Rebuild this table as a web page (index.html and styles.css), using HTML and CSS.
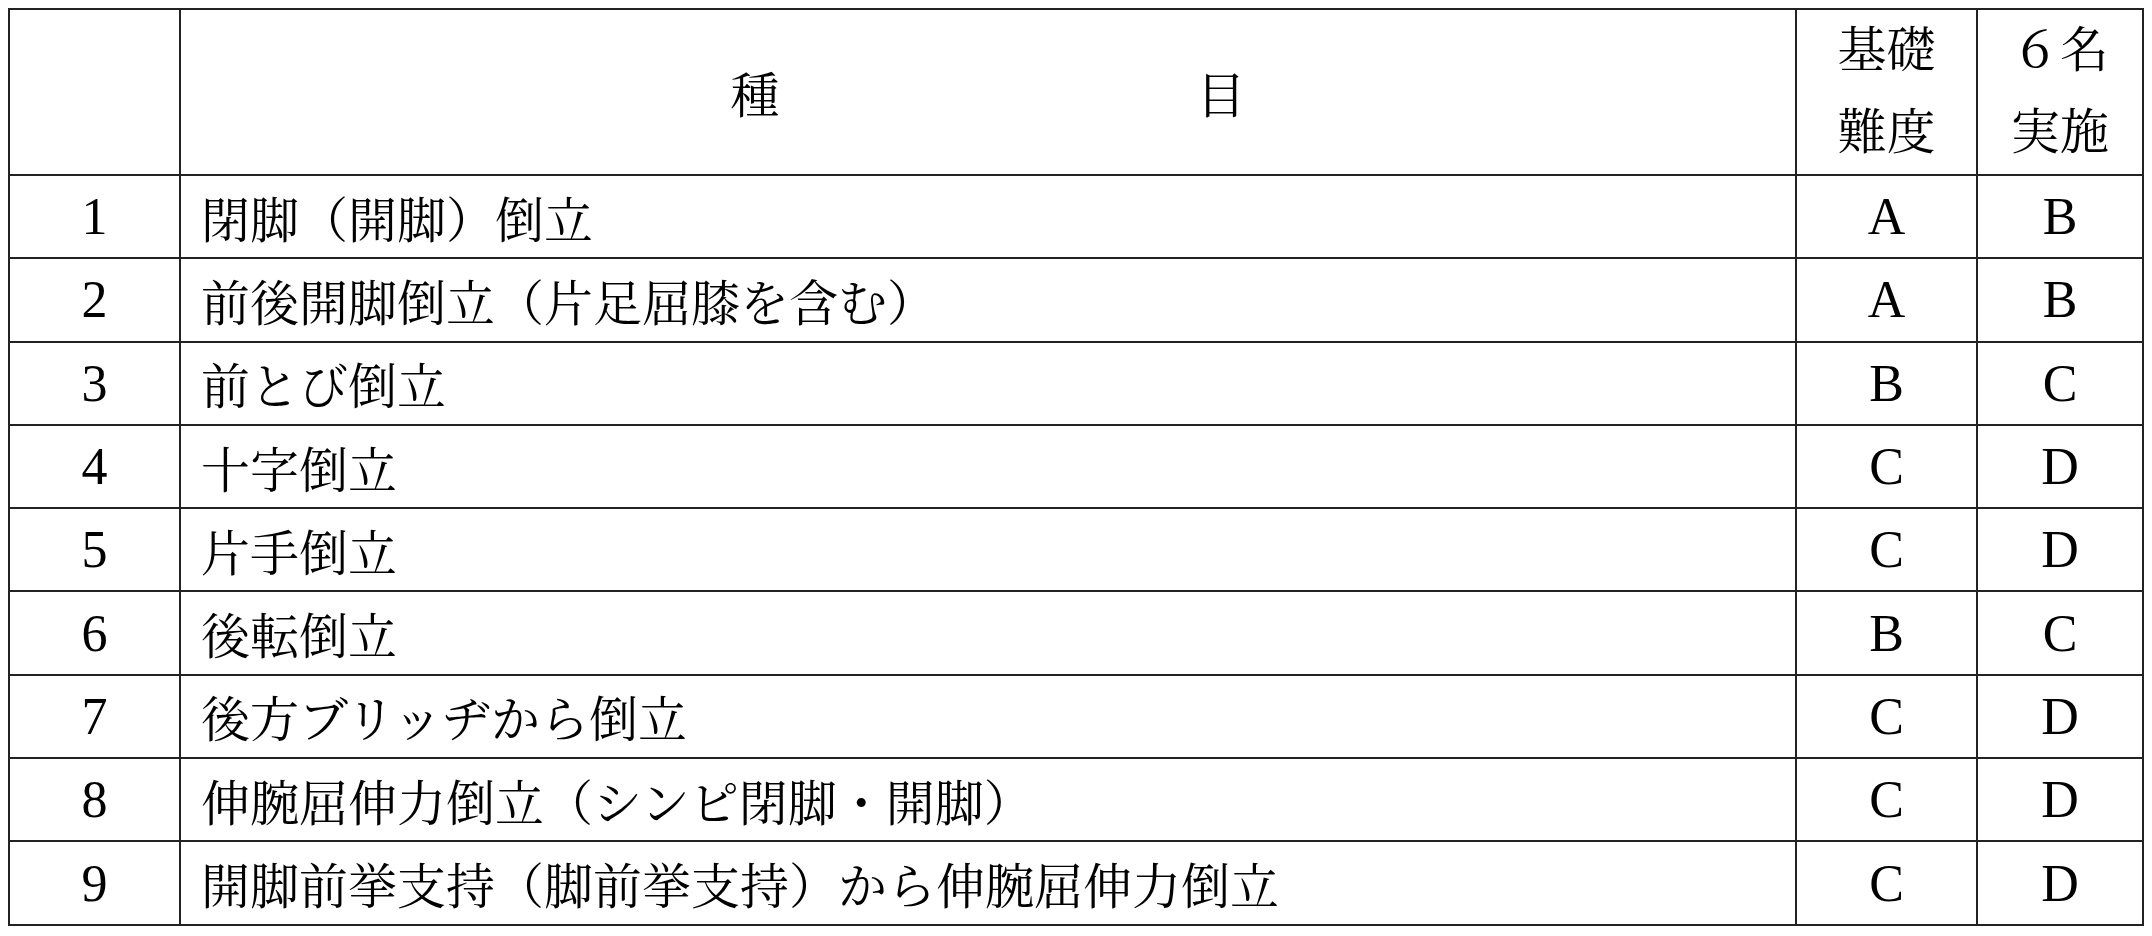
FILE: index.html
```html
<!DOCTYPE html>
<html lang="ja">
<head>
<meta charset="utf-8">
<title>倒立 種目</title>
<link rel="stylesheet" href="styles.css">
</head>
<body>
<table class="grid">
  <colgroup>
    <col class="c-no">
    <col class="c-name">
    <col class="c-base">
    <col class="c-six">
  </colgroup>
  <thead>
    <tr class="head">
      <th></th>
      <th><div class="title"><span>種</span><span>目</span></div></th>
      <th class="two">基礎<br>難度</th>
      <th class="two">６名<br>実施</th>
    </tr>
  </thead>
  <tbody>
    <tr><td class="lat">1</td><td class="name">閉脚（開脚）倒立</td><td class="lat">A</td><td class="lat">B</td></tr>
    <tr><td class="lat">2</td><td class="name">前後開脚倒立（片足屈膝を含む）</td><td class="lat">A</td><td class="lat">B</td></tr>
    <tr><td class="lat">3</td><td class="name">前とび倒立</td><td class="lat">B</td><td class="lat">C</td></tr>
    <tr><td class="lat">4</td><td class="name">十字倒立</td><td class="lat">C</td><td class="lat">D</td></tr>
    <tr><td class="lat">5</td><td class="name">片手倒立</td><td class="lat">C</td><td class="lat">D</td></tr>
    <tr><td class="lat">6</td><td class="name">後転倒立</td><td class="lat">B</td><td class="lat">C</td></tr>
    <tr><td class="lat">7</td><td class="name">後方ブリッヂから倒立</td><td class="lat">C</td><td class="lat">D</td></tr>
    <tr><td class="lat">8</td><td class="name">伸腕屈伸力倒立（シンピ閉脚・開脚）</td><td class="lat">C</td><td class="lat">D</td></tr>
    <tr><td class="lat">9</td><td class="name">開脚前挙支持（脚前挙支持）から伸腕屈伸力倒立</td><td class="lat">C</td><td class="lat">D</td></tr>
  </tbody>
</table>
</body>
</html>
```

FILE: styles.css
```css
html, body {
  margin: 0;
  padding: 0;
  background: #ffffff;
}

body {
  padding: 8px;
  font-family: "Liberation Serif", "Noto Serif CJK JP", "Noto Sans CJK JP", serif;
  color: #000000;
}

.grid {
  width: 100%;
  border-collapse: collapse;
  table-layout: fixed;
  font-size: 49px;
}

.c-no { width: 171px; }
.c-base { width: 181px; }
.c-six { width: 166px; }

.grid th,
.grid td {
  border: 2px solid #222222;
  padding: 0;
  text-align: center;
  vertical-align: middle;
  font-weight: normal;
}

.head {
  height: 165px;
}

.grid tbody tr {
  height: 83.3px;
}

.title {
  display: flex;
  justify-content: center;
  gap: 417px;
}

.two {
  line-height: 82px;
}

.grid td.name {
  text-align: left;
  padding-left: 20px;
  white-space: nowrap;
}

.lat {
  font-size: 52px;
}
```
